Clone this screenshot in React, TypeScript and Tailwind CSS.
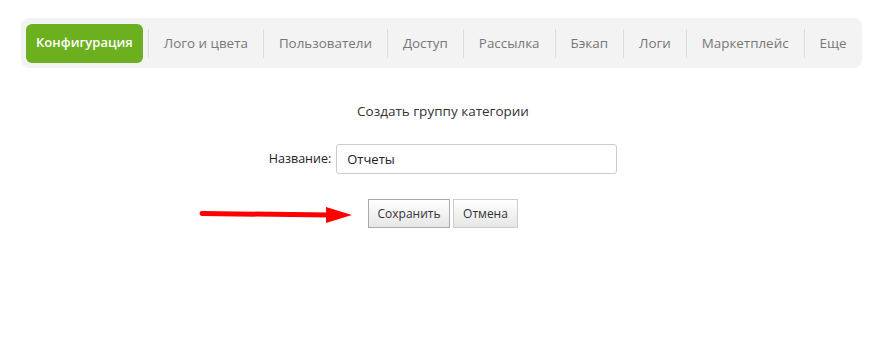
import React from 'react'

const tabs = ['Лого и цвета', 'Пользователи', 'Доступ', 'Рассылка', 'Бэкап', 'Логи', 'Маркетплейс', 'Еще']

export default function App() {
  return (
    <div
      className="relative w-[886px] h-[353px] bg-white"
      style={{ fontFamily: '"Open Sans", "Noto Sans", sans-serif' }}
    >
      <div className="ml-[21px] pt-[18px]">
        <div className="flex items-center w-[841px] h-[50px] rounded-lg bg-[#f3f3f3] pl-[5px] pr-[15px] overflow-hidden">
          <div className="shrink-0 whitespace-nowrap h-[39px] flex items-center px-[10px] mr-[5px] rounded-[6px] bg-[#6caf1f] text-white text-[13px] font-semibold">
            Конфигурация
          </div>
          {tabs.map((t) => (
            <div
              key={t}
              className="shrink-0 whitespace-nowrap h-[29px] flex items-center px-[15px] border-l border-[#dedede] text-[13.4px] text-[#777]"
            >
              {t}
            </div>
          ))}
        </div>
      </div>

      <div className="flex flex-col items-center">
        <div className="mt-[33px] text-[13.5px] leading-[20px] text-[#333]">Создать группу категории</div>

        <div className="mt-[23px] flex items-center">
          <label className="text-[12.5px] text-[#222] mr-[5px]">Название:</label>
          <input
            defaultValue="Отчеты"
            className="w-[281px] h-[30px] rounded-[3px] border border-[#ccc] px-[10px] text-[13px] text-[#222] outline-none"
          />
        </div>

        <div className="mt-[25px] flex gap-[3px]">
          <button className="w-[82px] h-[29px] border border-[#aaa] bg-gradient-to-b from-white to-[#e6e6e6] text-[12px] text-[#333]">
            Сохранить
          </button>
          <button className="w-[65px] h-[29px] border border-[#ccc] bg-gradient-to-b from-white to-[#e6e6e6] text-[12px] text-[#333]">
            Отмена
          </button>
        </div>
      </div>

      <svg className="absolute left-[198px] top-[204px]" width="158" height="22" viewBox="0 0 158 22">
        <path d="M4 9.5 L132 11" stroke="#ff0000" strokeWidth="5" strokeLinecap="round" fill="none" />
        <path d="M128 3 L154 11 L128 19 Z" fill="#ff0000" />
      </svg>
    </div>
  )
}
